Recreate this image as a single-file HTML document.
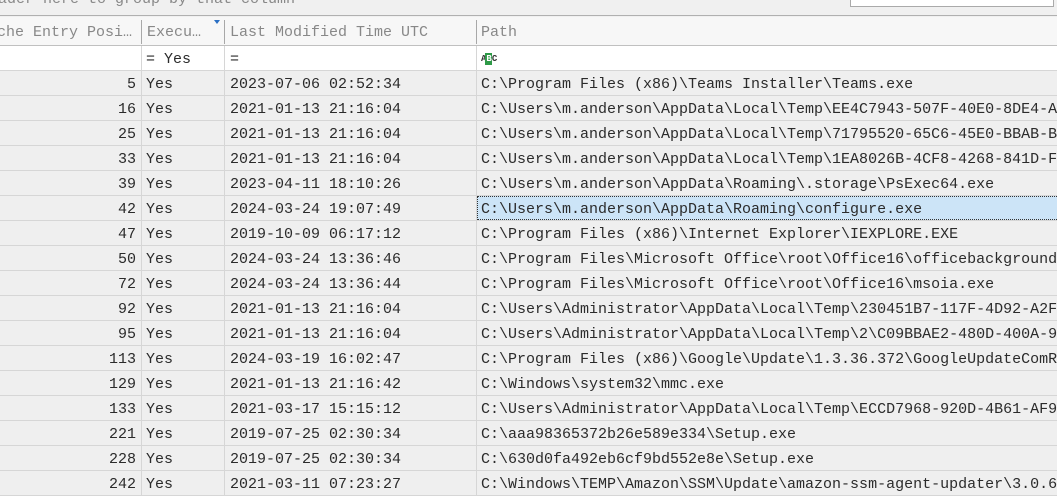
<!DOCTYPE html>
<html><head><style>
*{margin:0;padding:0;box-sizing:border-box}
body{width:1057px;height:492px;overflow:hidden;background:#f0f0f0;font-family:"Liberation Mono",monospace;font-size:15px;color:#2b2b2b;position:relative}
.top{position:absolute;left:0;top:0;width:1057px;height:16px;background:#f0f0f0;border-bottom:1px solid #b0b0b0;overflow:hidden}
.top span{position:absolute;left:-2px;top:-9px;color:#888;font-size:15px}
.search{position:absolute;left:850px;top:-2px;width:204px;height:9px;background:#fff;border:1px solid #aaa}
.row{position:absolute;left:0;width:1057px;height:25px;border-bottom:1px solid #d6d6d6;background:#efefef;white-space:nowrap;overflow:hidden}
.c{position:absolute;top:0;height:25px;line-height:24px;padding-top:2px;overflow:hidden;border-right:1px solid #d6d6d6}
.c1{left:0;width:142px;text-align:right;padding-right:5px}
.c2{left:142px;width:83px;padding-left:4px}
.c3{left:225px;width:252px;padding-left:5px}
.c4{left:477px;width:600px;padding-left:4px;border-right:none}
.hdr{top:17px;height:29px;background:#f7f7f7;border-bottom:1px solid #c0c0c0;color:#888}
.hdr .c{height:28px;line-height:28px;border-right:none}
.hdr .sep{position:absolute;top:3px;width:1px;height:24px;background:#a8a8a8}
.flt{top:46px;background:#fff}
.sel{background:#cce4f7;outline:1px dotted #333;outline-offset:-1px;height:24px}
</style></head><body>
<div class="top"><span>ader here to group by that column</span><div class="search"></div></div>
<div class="row hdr">
<div class="c c1" style="text-align:left;padding-left:0;left:-3px">che Entry Posi…</div>
<div class="sep" style="left:141px"></div>
<div class="c c2" style="left:143px">Execu…</div>
<div style="position:absolute;left:214px;top:3px;width:0;height:0;border-left:3px solid transparent;border-right:3px solid transparent;border-top:4px solid #2a6fc4"></div>
<div class="sep" style="left:224px"></div>
<div class="c c3" style="left:225px;padding-left:5px">Last Modified Time UTC</div>
<div class="sep" style="left:476px"></div>
<div class="c c4" style="left:477px;padding-left:4px">Path</div>
</div>
<div class="row flt">
<div class="c c1"></div>
<div class="c c2">= Yes</div>
<div class="c c3">=</div>
<div class="c c4"><span style="font-family:'Liberation Mono',monospace;font-size:9px;font-weight:bold;color:#333;position:relative;top:-2px;letter-spacing:-1px">A<span style="background:#2e9a47;color:#fff;padding:1px 1px">B</span>C</span></div>
</div>
<div id="rows"></div>
<script>
var d=[
["5","2023-07-06 02:52:34","C:\\Program Files (x86)\\Teams Installer\\Teams.exe"],
["16","2021-01-13 21:16:04","C:\\Users\\m.anderson\\AppData\\Local\\Temp\\EE4C7943-507F-40E0-8DE4-A"],
["25","2021-01-13 21:16:04","C:\\Users\\m.anderson\\AppData\\Local\\Temp\\71795520-65C6-45E0-BBAB-B"],
["33","2021-01-13 21:16:04","C:\\Users\\m.anderson\\AppData\\Local\\Temp\\1EA8026B-4CF8-4268-841D-F"],
["39","2023-04-11 18:10:26","C:\\Users\\m.anderson\\AppData\\Roaming\\.storage\\PsExec64.exe"],
["42","2024-03-24 19:07:49","C:\\Users\\m.anderson\\AppData\\Roaming\\configure.exe"],
["47","2019-10-09 06:17:12","C:\\Program Files (x86)\\Internet Explorer\\IEXPLORE.EXE"],
["50","2024-03-24 13:36:46","C:\\Program Files\\Microsoft Office\\root\\Office16\\officebackground"],
["72","2024-03-24 13:36:44","C:\\Program Files\\Microsoft Office\\root\\Office16\\msoia.exe"],
["92","2021-01-13 21:16:04","C:\\Users\\Administrator\\AppData\\Local\\Temp\\230451B7-117F-4D92-A2F"],
["95","2021-01-13 21:16:04","C:\\Users\\Administrator\\AppData\\Local\\Temp\\2\\C09BBAE2-480D-400A-9"],
["113","2024-03-19 16:02:47","C:\\Program Files (x86)\\Google\\Update\\1.3.36.372\\GoogleUpdateComR"],
["129","2021-01-13 21:16:42","C:\\Windows\\system32\\mmc.exe"],
["133","2021-03-17 15:15:12","C:\\Users\\Administrator\\AppData\\Local\\Temp\\ECCD7968-920D-4B61-AF9"],
["221","2019-07-25 02:30:34","C:\\aaa98365372b26e589e334\\Setup.exe"],
["228","2019-07-25 02:30:34","C:\\630d0fa492eb6cf9bd552e8e\\Setup.exe"],
["242","2021-03-11 07:23:27","C:\\Windows\\TEMP\\Amazon\\SSM\\Update\\amazon-ssm-agent-updater\\3.0.6"]];
var h="";
function e(s){return s.replace(/&/g,"&amp;").replace(/</g,"&lt;");}
d.forEach(function(r,i){
h+='<div class="row" style="top:'+(71+i*25)+'px"><div class="c c1">'+r[0]+'</div><div class="c c2">Yes</div><div class="c c3">'+r[1]+'</div><div class="c c4'+(i==5?' sel':'')+'">'+e(r[2])+'</div></div>';
});
document.getElementById("rows").innerHTML=h;
</script>
</body></html>
